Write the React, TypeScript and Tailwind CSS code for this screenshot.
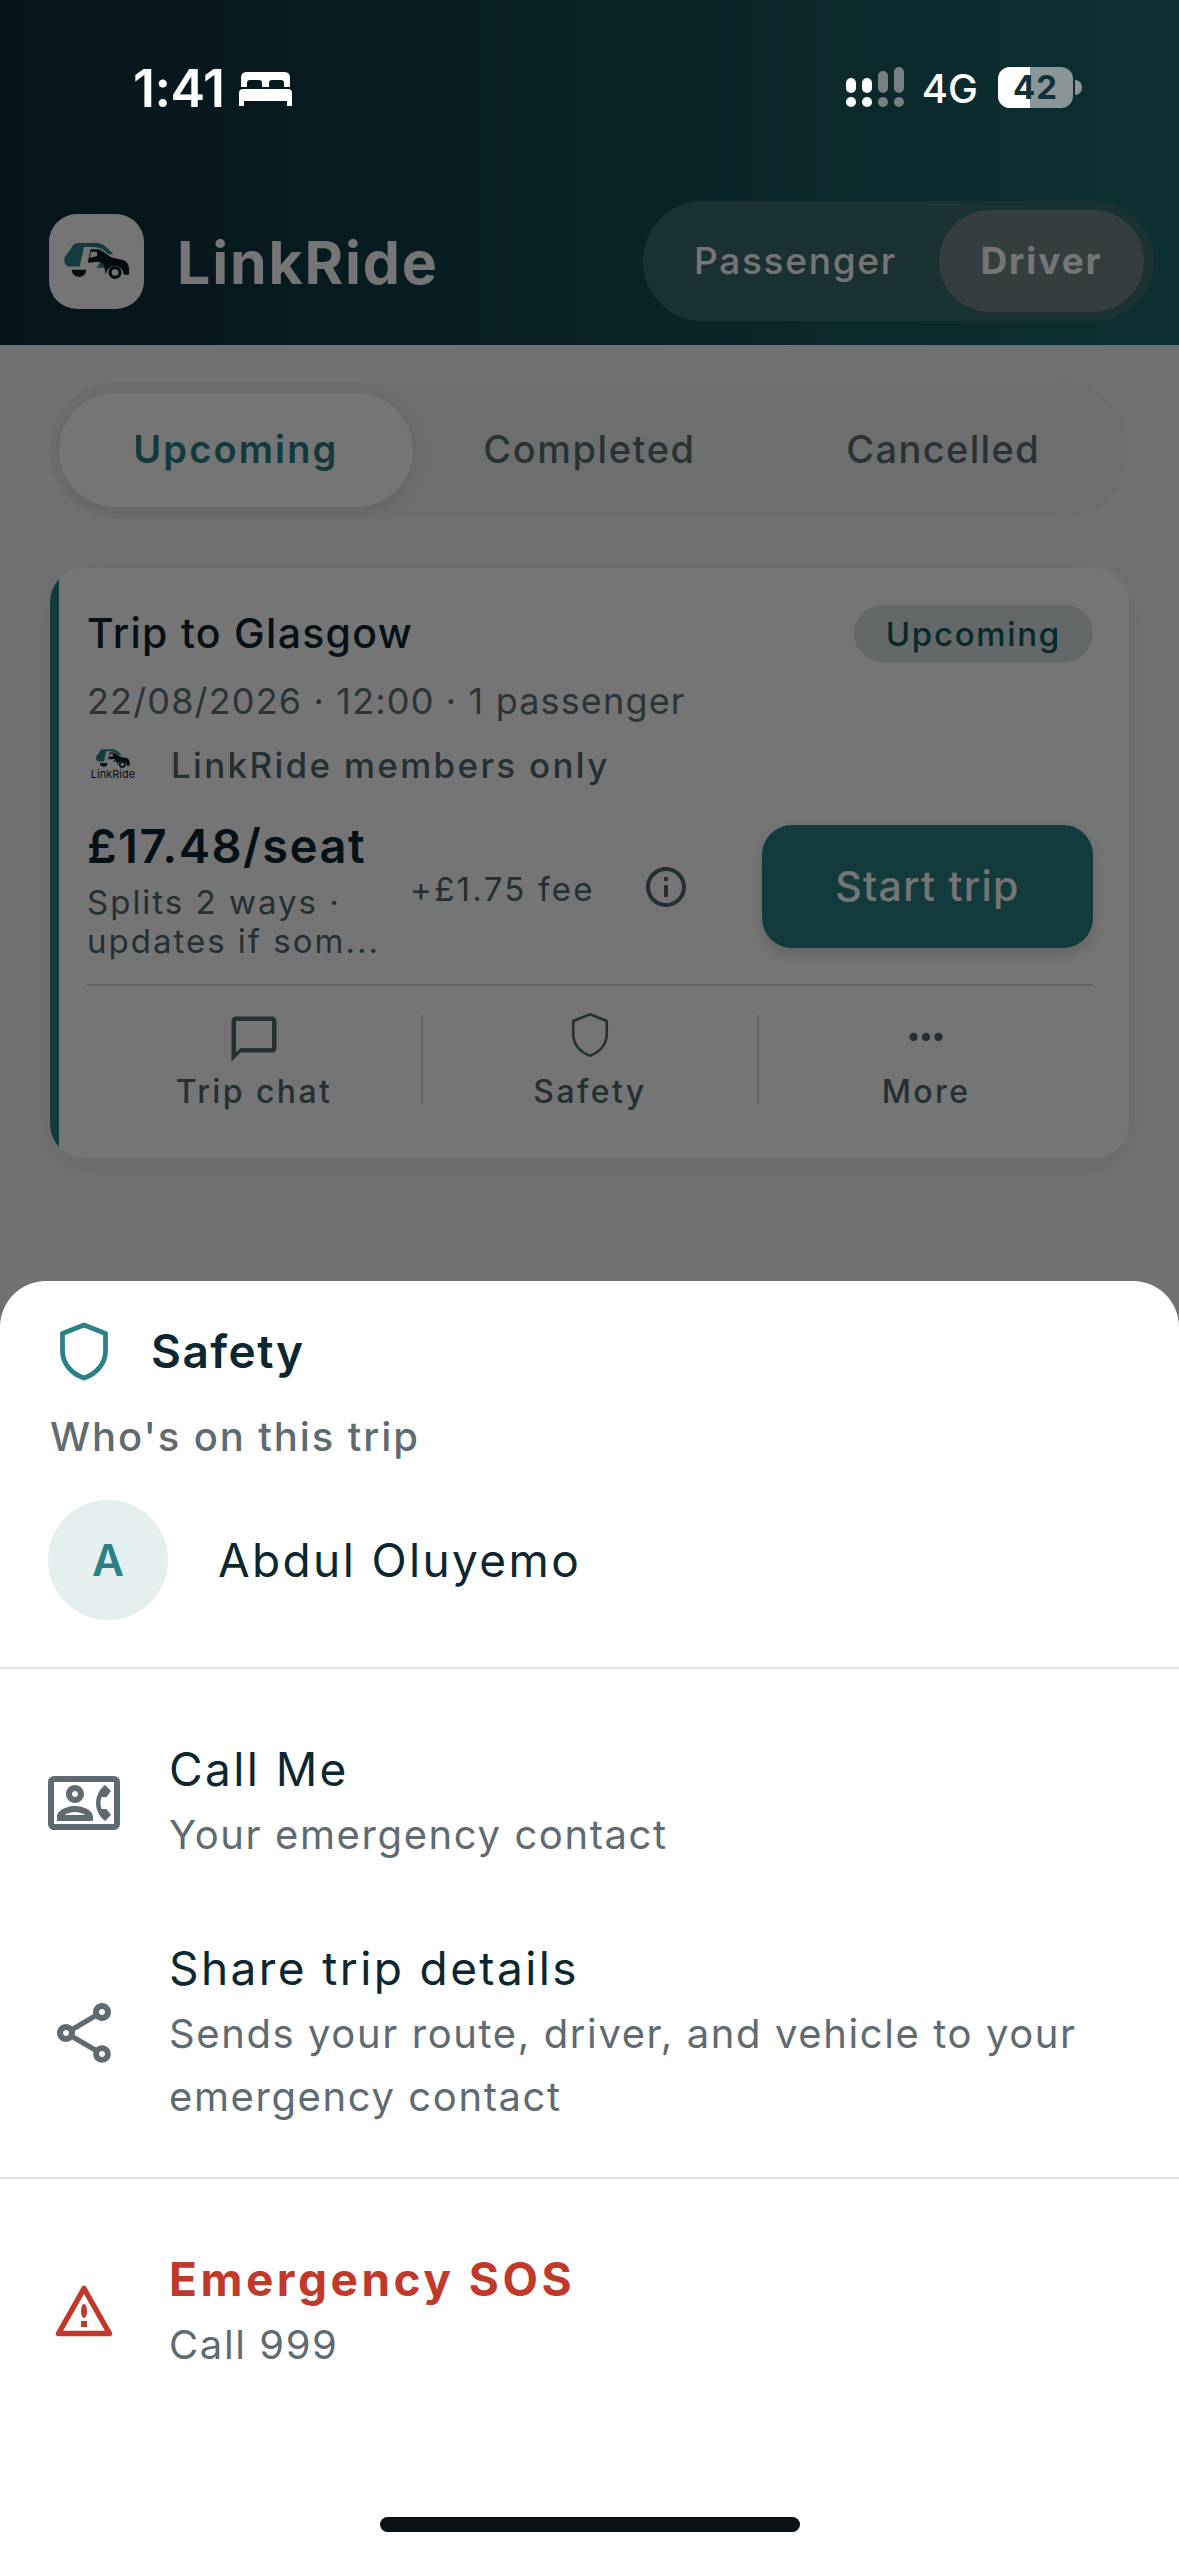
import { MdChatBubbleOutline, MdInfoOutline, MdMoreHoriz, MdOutlineContactPhone, MdOutlineShare } from "react-icons/md";

function ShieldIcon({ className, strokeWidth = 2 }: { className: string; strokeWidth?: number }) {
  return (
    <svg className={className} viewBox="0 0 48 59" fill="none" stroke="currentColor" strokeWidth={strokeWidth * 2.4}>
      <path d="M24 3 L45.5 11.5 V29 C45.5 42 36 52 24 56 C12 52 2.5 42 2.5 29 V11.5 Z" strokeLinejoin="round" />
    </svg>
  );
}

function CarMark({ className }: { className: string }) {
  return (
    <svg className={className} viewBox="0 0 200 110">
      <path d="M0 52 C0 38 15 30 23 13 C27 4 35 0 50 0 L100 0 C115 0 130 12 150 34 L133 34 C120 17 105 12 80 12 L60 12 L47 72 L15 72 C5 72 0 62 0 52 Z" fill="#2a8288" />
      <path d="M98 76 C110 62 112 55 112 44 L128 44 C134 52 138 62 138 76 Z" fill="#2a8288" />
      <path d="M80 19 L105 19 C120 24 130 37 145 44 L180 52 C193 57 198 67 198 84 L198 97 L182 97 A27 27 0 0 0 127 97 L122 72 C118 52 100 60 72 60 Z" fill="#0a1a20" />
      <path d="M81 27 L100 27 L100 40 L78 46 Z" fill="#fff" />
      <path d="M23 82 A22 22 0 0 0 67 82 Z" fill="#0a1a20" />
      <circle cx="155" cy="90" r="20" fill="#0a1a20" />
      <circle cx="155" cy="90" r="10" fill="#fff" />
    </svg>
  );
}

function BedIcon() {
  return (
    <svg className="w-[53px] h-[34px]" viewBox="0 0 53 34" fill="#fff">
      <path d="M8 0 H45 C49 0 51 2 51 6 V15 H45 V11 C45 9 44 8 42 8 H33 C31 8 30 9 30 11 V15 H23 V11 C23 9 22 8 20 8 H11 C9 8 8 9 8 11 V15 H2 V6 C2 2 4 0 8 0 Z" />
      <path d="M4 17 H49 C51.5 17 53 18.5 53 21 V34 H48 V29 H5 V34 H0 V21 C0 18.5 1.5 17 4 17 Z" />
    </svg>
  );
}

function SignalIcon() {
  return (
    <svg className="w-[58px] h-[40px]" viewBox="0 0 58 40">
      <rect x="0" y="11" width="10" height="15" rx="5" fill="#fff" />
      <rect x="16" y="11" width="10" height="15" rx="5" fill="#fff" />
      <rect x="32" y="4" width="10" height="22" rx="5" fill="#777f80" />
      <rect x="48" y="0" width="10" height="26" rx="5" fill="#777f80" />
      <circle cx="5" cy="35" r="5" fill="#fff" />
      <circle cx="21" cy="35" r="5" fill="#fff" />
      <circle cx="37" cy="35" r="5" fill="#777f80" />
      <circle cx="53" cy="35" r="5" fill="#777f80" />
    </svg>
  );
}

function Battery({ level }: { level: number }) {
  return (
    <div className="flex items-center gap-[2px]">
      <div className="relative w-[75px] h-[41px] rounded-[12px] overflow-hidden bg-[#8a9598] flex items-center justify-center">
        <div className="absolute left-0 top-0 bottom-0 bg-white" style={{ width: `${level}%` }} />
        <span className="relative text-[33px] leading-none font-bold tracking-[1px] text-[#10303a]">{level}</span>
      </div>
      <div className="w-[7px] h-[15px] rounded-r-full bg-[#8a9598]" />
    </div>
  );
}

function ActionItem({ icon, label, border }: { icon: React.ReactNode; label: string; border?: boolean }) {
  return (
    <div className={`flex-1 h-[89px] flex flex-col items-center justify-between ${border ? "border-r-[2px] border-[#d5dcdc]" : ""}`}>
      <div className="-mt-[3px]">{icon}</div>
      <span className="-mb-[4px] text-[32px] leading-[32px] font-medium tracking-[2.4px] text-[#506a70]">{label}</span>
    </div>
  );
}

function SheetRow({ icon, title, sub, titleClass }: { icon: React.ReactNode; title: string; sub: React.ReactNode; titleClass?: string }) {
  return (
    <div className="flex items-center">
      <div className="w-[169px] flex justify-center pr-[2px] shrink-0">{icon}</div>
      <div>
        <div className={`mb-[4px] ${titleClass ?? "text-[46px] leading-[60px] tracking-[2.4px] text-[#0c2730]"}`}>{title}</div>
        <div className="text-[40px] leading-[63px] tracking-[1.6px] text-[#5f6b70]">{sub}</div>
      </div>
    </div>
  );
}

export default function App() {
  return (
    <div className="relative w-[1179px] h-[2556px] overflow-hidden bg-[#f4f8f7] font-['Inter',sans-serif]">
      {/* status bar sits above the scrim */}
      <div className="absolute left-0 right-0 top-0 z-20 h-[174px] pl-[133px] pr-[97px] flex items-center justify-between">
        <div className="flex items-center gap-[14px] pt-[4px]">
          <span className="text-[52px] leading-none font-semibold text-white tracking-[-0.5px]">1:41</span>
          <BedIcon />
        </div>
        <div className="flex items-center">
          <SignalIcon />
          <span className="ml-[18px] mr-[20px] pt-[3px] text-[40px] leading-none font-medium text-white">4G</span>
          <Battery level={42} />
        </div>
      </div>

      <header className="h-[345px] pt-[201px] pl-[49px] pr-[25px] bg-gradient-to-r from-[#0c2c38] to-[#1f6a70]">
        <div className="flex items-center justify-between h-[120px]">
          <div className="flex items-center gap-[33px]">
            <div className="w-[95px] h-[95px] rounded-[28px] bg-white flex items-center justify-center">
              <CarMark className="w-[66px] h-[36px]" />
            </div>
            <span className="pt-[2px] text-[59px] leading-none font-bold text-white tracking-[1.8px]">LinkRide</span>
          </div>
          <div className="w-[511px] h-[120px] rounded-full bg-[#3a6d70] pl-[51px] pr-[10px] flex items-center justify-between">
            <span className="text-[37px] font-medium tracking-[1.7px] text-white">Passenger</span>
            <div className="w-[205px] h-[102px] rounded-full bg-[#748888] flex items-center justify-center">
              <span className="text-[37px] font-bold tracking-[1.9px] text-white">Driver</span>
            </div>
          </div>
        </div>
      </header>

      <main className="px-[50px] pt-[36px]">
        <div className="h-[138px] rounded-full bg-[#edf2f1] px-[9px] flex items-center">
          <div className="flex-1 h-[114px] pb-[2px] rounded-full bg-white shadow-[0_4px_20px_rgba(0,0,0,0.1)] flex items-center justify-center text-[38px] font-semibold tracking-[2.15px] text-[#2a8288]">Upcoming</div>
          <div className="flex-1 pb-[2px] flex justify-center text-[38px] font-medium tracking-[1.55px] text-[#5a6d72]">Completed</div>
          <div className="flex-1 pb-[2px] flex justify-center text-[38px] font-medium tracking-[1.35px] text-[#5a6d72]">Cancelled</div>
        </div>

        <div className="mt-[49px] h-[590px] rounded-[34px] overflow-hidden bg-white flex shadow-[0_8px_36px_rgba(0,0,0,0.08)]">
          <div className="w-[9px] shrink-0 bg-[#2a8288]" />
          <div className="flex-1 pl-[28px] pr-[36px] pt-[37px]">
            <div className="flex items-start justify-between">
              <span className="pt-[3px] text-[41px] leading-[50px] font-medium tracking-[1.3px] text-[#0c2730]">Trip to Glasgow</span>
              <span className="h-[57px] px-[32px] pt-[2px] rounded-full bg-[#dae3e3] flex items-center text-[33px] font-medium tracking-[1.7px] text-[#0f5a60]">Upcoming</span>
            </div>
            <div className="mt-[14px] text-[36px] leading-[50px] tracking-[1.15px] text-[#5f7378]">22/08/2026 · 12:00 · 1 passenger</div>
            <div className="mt-[13px] flex items-center gap-[32px]">
              <div className="w-[52px] h-[52px] flex flex-col items-center justify-center">
                <CarMark className="w-[34px] h-[19px]" />
                <span className="text-[11px] leading-[13px] text-[#0c2730]">LinkRide</span>
              </div>
              <span className="text-[35px] leading-[52px] font-medium tracking-[2.3px] text-[#506a70]">LinkRide members only</span>
            </div>
            <div className="mt-[27px] flex items-center">
              <div className="w-[323px] shrink-0">
                <div className="text-[47px] leading-[56px] font-semibold tracking-[1.5px] text-[#0c2730]">£17.48/seat</div>
                <div className="mt-[9px] text-[33px] leading-[39px] tracking-[2px] text-[#506a70]">Splits 2 ways ·<br />updates if som...</div>
              </div>
              <span className="text-[33px] tracking-[2.3px] text-[#506a70]">+£1.75 fee</span>
              <MdInfoOutline className="ml-[47px] -mt-[6px] text-[#506a70]" size={48} />
              <div className="ml-auto -mt-[6px] w-[331px] h-[123px] rounded-[30px] bg-[#2a8288] shadow-[0_6px_16px_rgba(0,0,0,0.16)] flex items-center justify-center text-[41px] font-medium tracking-[1.3px] text-white">Start trip</div>
            </div>
            <div className="mt-[23px] border-t-[2px] border-[#d5dcdc] pt-[29px] flex">
              <ActionItem border label="Trip chat" icon={<MdChatBubbleOutline size={54} className="text-[#506a70]" />} />
              <ActionItem border label="Safety" icon={<ShieldIcon className="w-[40px] h-[46px] text-[#506a70]" strokeWidth={1.4} />} />
              <ActionItem label="More" icon={<MdMoreHoriz size={50} className="text-[#506a70]" />} />
            </div>
          </div>
        </div>
      </main>

      {/* scrim */}
      <div className="absolute inset-0 z-10 bg-black/[0.54]" />

      <section className="absolute left-0 right-0 bottom-0 z-20 h-[1275px] rounded-t-[46px] bg-white">
        <div className="pt-[41px] pl-[60px] flex items-center gap-[43px] h-[100px]">
          <ShieldIcon className="w-[48px] h-[59px] text-[#2a8288]" />
          <span className="text-[46px] leading-[59px] font-semibold tracking-[1.5px] text-[#0c2730]">Safety</span>
        </div>
        <div className="mt-[31px] pl-[50px] text-[40px] leading-[50px] font-medium tracking-[1.9px] text-[#5f6b70]">Who's on this trip</div>
        <div className="mt-[38px] pl-[48px] flex items-center gap-[50px]">
          <div className="w-[120px] h-[120px] rounded-full bg-[#e4efef] flex items-center justify-center text-[44px] font-semibold text-[#2a8288]">A</div>
          <span className="text-[46px] tracking-[2.35px] text-[#0c2730]">Abdul Oluyemo</span>
        </div>
        <div className="mt-[47px] h-[2px] bg-[#dfe4e4]" />

        <div className="pt-[70px]">
          <SheetRow
            icon={<MdOutlineContactPhone size={72} className="text-[#5f6b70]" />}
            title="Call Me"
            sub="Your emergency contact"
          />
        </div>
        <div className="pt-[72px]">
          <SheetRow
            icon={<MdOutlineShare size={72} className="text-[#5f6b70]" />}
            title="Share trip details"
            sub={<>Sends your route, driver, and vehicle to your<br />emergency contact</>}
          />
        </div>
        <div className="mt-[49px] h-[2px] bg-[#dfe4e4]" />

        <div className="pt-[70px]">
          <SheetRow
            icon={
              <svg className="w-[58px] h-[52px] -mt-[3px]" viewBox="0 0 58 52" fill="none">
                <path d="M29 3.5 L54.5 48.5 H3.5 Z" stroke="#c0392b" strokeWidth="5.5" strokeLinejoin="round" />
                <ellipse cx="29" cy="26" rx="3" ry="7" fill="#c0392b" />
                <rect x="26" y="36" width="6" height="6" fill="#c0392b" />
              </svg>
            }
            title="Emergency SOS"
            titleClass="text-[46px] leading-[60px] font-bold tracking-[3.5px] text-[#c0392b]"
            sub="Call 999"
          />
        </div>
      </section>

      {/* home indicator */}
      <div className="absolute z-30 left-[380px] bottom-[24px] w-[420px] h-[15px] rounded-full bg-[#0a1215]" />
    </div>
  );
}
